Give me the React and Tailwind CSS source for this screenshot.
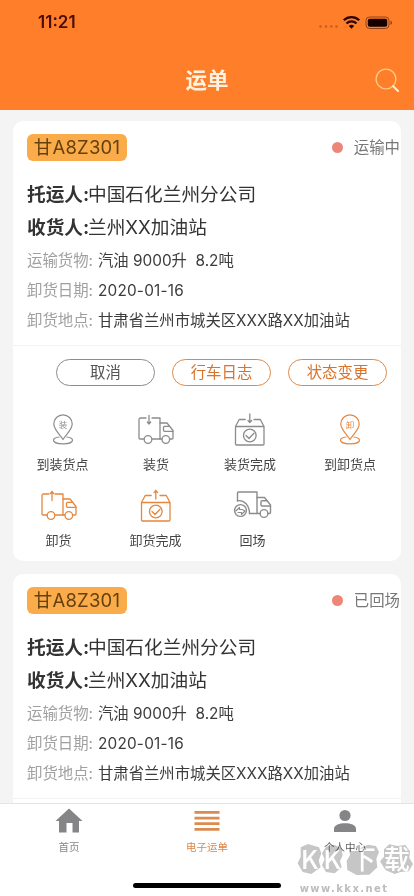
import React from "react";

const ORANGE = "#e5873f";
const GREY = "#8c8c8c";

function Pin({ char, color }) {
  return (
    <svg width="40" height="34" viewBox="0 0 40 34" fill="none" stroke={color} strokeWidth="1.2" strokeLinejoin="round">
      <path d="M20 26.500C17 21.500 10.800 16.500 10.800 11a9.200 9.200 0 0 1 18.400 0C29.200 16.500 23 21.500 20 26.500z" />
      <path d="M16.500 24c-3.300.3-6 1.500-6 3.200 0 2.100 4.200 3.600 9.500 3.600s9.500-1.500 9.500-3.600c0-1.700-2.700-2.900-6-3.200" />
      <text x="20" y="14.500" textAnchor="middle" fontSize="8.500" stroke="none" fill={color} fontFamily="Noto Sans CJK SC, sans-serif">{char}</text>
    </svg>
  );
}

function Truck({ up, color }) {
  return (
    <svg width="40" height="34" viewBox="0 0 40 34" fill="none" stroke={color} strokeWidth="1.300" strokeLinejoin="round" strokeLinecap="round">
      <path d="M10 5H4.500a1.500 1.500 0 0 0-1.500 1.500V25a1 1 0 0 0 1 1h4M16 5H24v21H16" />
      {up ? <path d="M13 11.500V2.500M11.300 4.600 13 2.500l1.700 2.100" /> : <path d="M13 2.500V11M11.300 9l1.700 2 1.700-2" />}
      <path d="M24 10h7L37 17.500v7.500a1 1 0 0 1-1 1h-2.200M24 26h2" />
      <path d="M33.500 13.300H28.500a1 1 0 0 0-1 1v3a1 1 0 0 0 1 1h8.500" />
      <circle cx="12" cy="26.500" r="3.800" />
      <circle cx="29.800" cy="26.500" r="3.800" />
    </svg>
  );
}

function Box({ up, color }) {
  return (
    <svg width="40" height="34" viewBox="0 0 40 34" fill="none" stroke={color} strokeWidth="1.300" strokeLinejoin="round" strokeLinecap="round">
      <rect x="5.500" y="13.500" width="28.500" height="18.500" rx="1" />
      <path d="M5.500 13.500 9.200 6.500h6M24 6.500h6.300l3.700 7" />
      {up ? <path d="M19.800 10V1.500M18 3.600l1.800-2.100 1.800 2.100" /> : <path d="M19.800 1V9.500M18 7.500l1.800 2 1.800-2" />}
      <circle cx="19.800" cy="22.500" r="6.300" />
      <path d="m16 22.500 3 3 5-5.300" />
    </svg>
  );
}

function ReturnTruck({ color }) {
  return (
    <svg width="40" height="34" viewBox="0 0 40 34" fill="none" stroke={color} strokeWidth="1.400" strokeLinejoin="round" strokeLinecap="round">
      <path d="M4.500 12V4a1 1 0 0 1 1-1H24v21.500h-7.500" />
      <path d="M24 8.500h7.500L37.500 16v7.500a1 1 0 0 1-1 1h-1.500M24 24.500h3" />
      <path d="M34 11.800H29a1 1 0 0 0-1 1V16a1 1 0 0 0 1 1h8.500" />
      <path d="M4.500 11.700c7-1 12 4.800 12 12.800" />
      <circle cx="7.500" cy="21.500" r="5.900" />
      <circle cx="31" cy="24.500" r="3.900" />
      <path d="M3 21.800 6.500 18.500v2h2.500c1.500 0 2 1.500 3 1.500M5 23.500h3.500v2l3.500-3.500" strokeWidth="1.200" />
    </svg>
  );
}

function Step({ icon, label }) {
  return (
    <div className="flex h-[76px] flex-col items-center">
      {icon}
      <span className="mt-[8px] whitespace-nowrap text-[13px] leading-[18px] text-[#444]">{label}</span>
    </div>
  );
}

function Field({ label, children }) {
  return (
    <div className="flex h-[30px] items-center whitespace-pre">
      <span className="w-[71px] text-[15.4px] text-[#a0a0a0]">{label}</span>
      <span className="text-[15.350px] text-[#3c3c3c]">{children}</span>
    </div>
  );
}

const pill = "flex h-[27px] w-[99px] items-center justify-center rounded-full border text-[15.400px]";

function Waybill({ status, children }) {
  return (
    <section className="shrink-0 rounded-[10px] bg-white">
      <div className="pl-[14px] pt-[13px]">
        <div className="flex h-[27px] items-center justify-between">
          <span className="flex h-[27px] w-[100px] items-center justify-center rounded-[6px] bg-[#f9ac49] pt-px text-[18.500px] tracking-[0.200px] text-[#66400f]">甘A8Z301</span>
          <span className="flex items-center gap-[11px] pr-px text-[15.400px] text-[#777]">
            <i className="size-[11px] rounded-full bg-[#ee8678]" />
            {status}
          </span>
        </div>
        <div className="mt-[18px] whitespace-nowrap text-[18.700px] text-[#333]">
          <p className="flex h-[33px] items-center"><b className="w-[61px]">托运人:</b>中国石化兰州分公司</p>
          <p className="flex h-[33px] items-center"><b className="w-[61px]">收货人:</b>兰州XX加油站</p>
        </div>
        <div className="mt-px pb-[9px]">
          <Field label="运输货物:">{"汽油 9000升  8.2吨"}</Field>
          <Field label="卸货日期:"><span className="tracking-[0.200px]">2020-01-16</span></Field>
          <Field label="卸货地点:">甘肃省兰州市城关区XXX路XX加油站</Field>
        </div>
      </div>
      <div className="border-t border-[#f2f2f2]">{children}</div>
    </section>
  );
}

export default function App() {
  return (
    <div className="relative flex h-[896px] w-[414px] flex-col overflow-hidden bg-[#f4f4f5] font-['Inter','Noto_Sans_CJK_SC',sans-serif]">
      <header className="h-[110px] shrink-0 bg-[#ff7e2a]">
        <div className="flex h-[45px] items-center justify-between pl-[38px] pr-[21px]">
          <span className="text-[17px] font-semibold text-[#4a0d08]">11:21</span>
          <svg width="76" height="16" viewBox="0 0 76 16">
            <g fill="#c65d25">
              <circle cx="3.500" cy="11.500" r="1.300" /><circle cx="9" cy="11.500" r="1.300" /><circle cx="14.300" cy="11.500" r="1.300" /><circle cx="19.500" cy="11.500" r="1.300" />
            </g>
            <g fill="none" stroke="#2c0303" strokeWidth="2.300">
              <path d="M26.800 5.300a11 11 0 0 1 15.400 0" />
              <path d="M29.500 8.500a7.100 7.100 0 0 1 10 0" />
            </g>
            <path d="M31.800 11.100a3.800 3.800 0 0 1 5.400 0L34.500 13.800z" fill="#2c0303" />
            <rect x="49" y="2" width="23" height="11.500" rx="3.500" fill="none" stroke="#8e421b" />
            <rect x="50.800" y="3.800" width="19.400" height="7.900" rx="1.800" fill="#160000" />
            <path d="M73.500 5.800c2 .5 2 3.500 0 4z" fill="#8e421b" />
          </svg>
        </div>
        <div className="grid h-[69px] grid-cols-[1fr_auto_1fr] items-center pr-[14px]">
          <span />
          <h1 className="pl-[14px] text-[21.500px] font-bold leading-[30px] text-[#fff3df]">运单</h1>
          <svg className="justify-self-end" width="26" height="26" viewBox="0 0 26 26" fill="none" strokeLinecap="round">
            <circle cx="12" cy="12" r="9.900" stroke="#ffc984" strokeWidth="1.400" />
            <path d="m19 19 5 5" stroke="#ffe6bd" strokeWidth="2.200" />
          </svg>
        </div>
      </header>

      <main className="flex h-[693px] shrink-0 flex-col gap-[13px] overflow-hidden px-[13px] pt-[11px]">
        <Waybill status="运输中">
          <div className="flex justify-end gap-[17px] pr-[14px] pt-[13px]">
            <button className={pill + " border-[#8c8c8c] text-[#555]"}>取消</button>
            <button className={pill + " border-[#e5873f] text-[#d9722b]"}>行车日志</button>
            <button className={pill + " border-[#e5873f] text-[#d9722b]"}>状态变更</button>
          </div>
          <div className="grid grid-cols-[93px_94px_94px_106px] pl-[3px] pt-[27px]">
            <Step icon={<Pin char="装" color={GREY} />} label="到装货点" />
            <Step icon={<Truck color={GREY} />} label="装货" />
            <Step icon={<Box color={GREY} />} label="装货完成" />
            <Step icon={<Pin char="卸" color={ORANGE} />} label="到卸货点" />
          </div>
          <div className="grid h-[72px] grid-cols-[91px_103px_91px]">
            <Step icon={<Truck up color={ORANGE} />} label="卸货" />
            <Step icon={<Box up color={ORANGE} />} label="卸货完成" />
            <Step icon={<ReturnTruck color={GREY} />} label="回场" />
          </div>
        </Waybill>
        <Waybill status="已回场">
          <div className="h-[60px]" />
        </Waybill>
      </main>

      <nav className="flex h-[93px] shrink-0 flex-col items-center border-t border-[#e4e4e4] bg-white">
        <div className="grid w-full grid-cols-3 pt-[4px] text-[10.500px] leading-[15px] text-[#888]">
          <div className="flex flex-col items-center gap-[7px]">
            <svg width="28" height="25" viewBox="0 0 28 25" fill="#858588"><path d="M14 .5 27.500 13H24v11.500h-6.500V15h-6v9.500H4V13H.5z" /></svg>
            首页
          </div>
          <div className="flex flex-col items-center gap-[7px] text-[#dd8548]">
            <svg width="26" height="25" viewBox="0 0 26 25" fill="#dc8a50"><path d="M.5 3h25v2.800H.5zM.5 8.700h25v2.800H.5zM.5 14.300h25v2.800H.5zM.5 19.900h25v2.800H.5z" /></svg>
            电子运单
          </div>
          <div className="flex flex-col items-center gap-[7px] text-[#666]">
            <svg width="24" height="25" viewBox="0 0 24 25" fill="#858588"><circle cx="12" cy="7.500" r="5.600" /><path d="M1 24v-3.300C1 17 6.500 15.200 12 15.200s11 1.800 11 5.500V24z" /></svg>
            个人中心
          </div>
        </div>
        <div className="mt-[28px] h-[5px] w-[148px] rounded-full bg-black" />
      </nav>

      <svg className="pointer-events-none absolute bottom-0 right-0 overflow-visible mix-blend-multiply" width="118" height="56" viewBox="276 150 354 168">
        <g fill="#c6c6c6">
          <path d="M290 172 312 162 345 172 352 190 344 212 350 232 322 252 296 246 281 220 290 200z" />
          <path d="M366 170 390 164 412 174 416 196 408 214 413 232 392 250 366 246 354 226 362 208 354 190z" />
          <path d="M436 172 462 178 492 164 516 168 525 186 517 206 520 232 496 254 458 255 430 240 428 212 438 196z" />
          <path d="M540 178 556 163 580 168 604 165 618 184 616 204 627 222 614 244 590 246 572 252 544 240 528 214 540 200z" />
        </g>
        <g fill="#fff" fontFamily="Noto Sans CJK SC, sans-serif" fontWeight="500" fontSize="78">
          <text x="290" y="238" textLength="52" lengthAdjust="spacingAndGlyphs">K</text>
          <text x="358" y="238" textLength="52" lengthAdjust="spacingAndGlyphs">K</text>
          <text x="437" y="238">下</text>
          <text x="539" y="238">载</text>
        </g>
        <text x="287" y="307" fontSize="30" fontWeight="bold" fill="#bdbdbd" textLength="262" fontFamily="DejaVu Sans, sans-serif">www.kkx.net</text>
      </svg>
    </div>
  );
}
